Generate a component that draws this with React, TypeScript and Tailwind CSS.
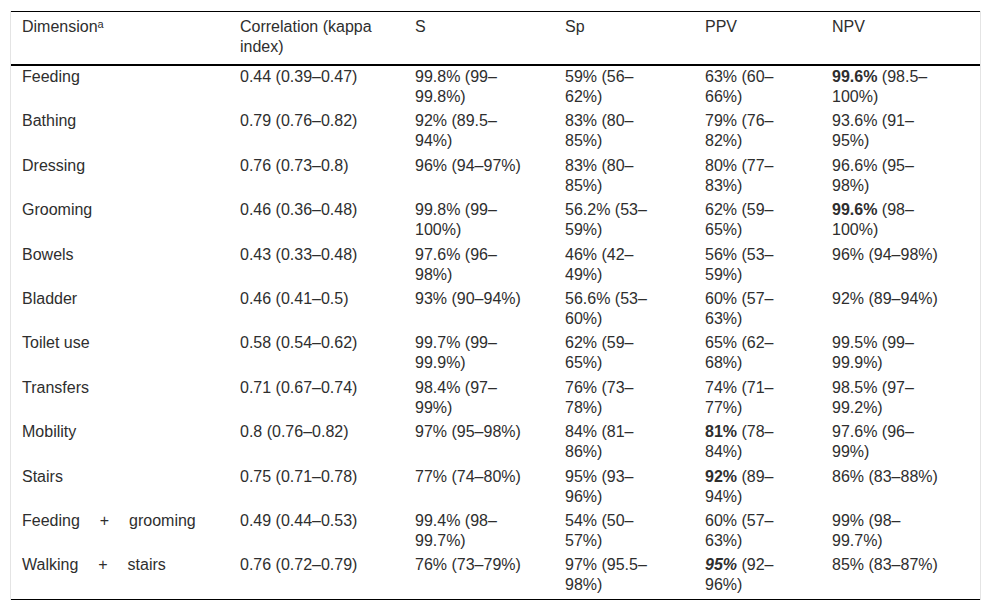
import React from "react";

type Cell = { text: string; bold?: string; italic?: boolean };

const rows: { dim: string; wide?: boolean; cells: (string | Cell)[] }[] = [
  { dim: "Feeding", cells: ["0.44 (0.39–0.47)", "99.8% (99–99.8%)", "59% (56–62%)", "63% (60–66%)", { bold: "99.6%", text: " (98.5–100%)" }] },
  { dim: "Bathing", cells: ["0.79 (0.76–0.82)", "92% (89.5–94%)", "83% (80–85%)", "79% (76–82%)", "93.6% (91–95%)"] },
  { dim: "Dressing", cells: ["0.76 (0.73–0.8)", "96% (94–97%)", "83% (80–85%)", "80% (77–83%)", "96.6% (95–98%)"] },
  { dim: "Grooming", cells: ["0.46 (0.36–0.48)", "99.8% (99–100%)", "56.2% (53–59%)", "62% (59–65%)", { bold: "99.6%", text: " (98–100%)" }] },
  { dim: "Bowels", cells: ["0.43 (0.33–0.48)", "97.6% (96–98%)", "46% (42–49%)", "56% (53–59%)", "96% (94–98%)"] },
  { dim: "Bladder", cells: ["0.46 (0.41–0.5)", "93% (90–94%)", "56.6% (53–60%)", "60% (57–63%)", "92% (89–94%)"] },
  { dim: "Toilet use", cells: ["0.58 (0.54–0.62)", "99.7% (99–99.9%)", "62% (59–65%)", "65% (62–68%)", "99.5% (99–99.9%)"] },
  { dim: "Transfers", cells: ["0.71 (0.67–0.74)", "98.4% (97–99%)", "76% (73–78%)", "74% (71–77%)", "98.5% (97–99.2%)"] },
  { dim: "Mobility", cells: ["0.8 (0.76–0.82)", "97% (95–98%)", "84% (81–86%)", { bold: "81%", text: " (78–84%)" }, "97.6% (96–99%)"] },
  { dim: "Stairs", cells: ["0.75 (0.71–0.78)", "77% (74–80%)", "95% (93–96%)", { bold: "92%", text: " (89–94%)" }, "86% (83–88%)"] },
  { dim: "Feeding + grooming", wide: true, cells: ["0.49 (0.44–0.53)", "99.4% (98–99.7%)", "54% (50–57%)", "60% (57–63%)", "99% (98–99.7%)"] },
  { dim: "Walking + stairs", wide: true, cells: ["0.76 (0.72–0.79)", "76% (73–79%)", "97% (95.5–98%)", { bold: "95%", italic: true, text: " (92–96%)" }, "85% (83–87%)"] },
];

const headers = ["Correlation (kappa index)", "S", "Sp", "PPV", "NPV"];

function renderCell(c: string | Cell) {
  if (typeof c === "string") return c;
  return (
    <>
      <b className={c.italic ? "font-bold italic" : "font-bold"}>{c.bold}</b>
      {c.text}
    </>
  );
}

export default function App() {
  return (
    <div className="min-h-screen bg-white font-['Liberation_Sans',Arial,sans-serif] text-[16px] leading-[20px] text-[#2e2e2e]">
      <div className="ml-[10px] pt-[11px] w-[971px]">
        <div className="border-x border-[#e4e4e4]">
          <table className="w-full table-fixed border-separate border-spacing-0 border-t border-b border-black">
            <colgroup>
              <col className="w-[218px]" />
              <col className="w-[175px]" />
              <col className="w-[150px]" />
              <col className="w-[140px]" />
              <col className="w-[127px]" />
              <col className="w-[159px]" />
            </colgroup>
            <thead>
              <tr>
                <th className="text-left font-normal align-top pl-[11px] pr-[31px] pt-[5px] pb-[7px] border-b-2 border-black">
                  Dimension<span className="text-[11px] align-top relative top-[-3px]">a</span>
                </th>
                {headers.map((h) => (
                  <th
                    key={h}
                    className="text-left font-normal align-top pl-[11px] pr-[31px] pt-[5px] pb-[7px] border-b-2 border-black"
                  >
                    {h}
                  </th>
                ))}
              </tr>
            </thead>
            <tbody>
              {rows.map((r, i) => (
                <tr key={i} className="h-[44.4px]">
                  <td
                    className={
                      r.wide
                        ? "align-top pl-[11px] pr-[31px] pt-px pb-[3.4px] [word-spacing:15.5px]"
                        : "align-top pl-[11px] pr-[31px] pt-px pb-[3.4px]"
                    }
                  >
                    {r.dim}
                  </td>
                  {r.cells.map((c, j) => (
                    <td key={j} className="align-top pl-[11px] pr-[31px] pt-px pb-[3.4px]">
                      {renderCell(c)}
                    </td>
                  ))}
                </tr>
              ))}
            </tbody>
          </table>
        </div>
      </div>
    </div>
  );
}
